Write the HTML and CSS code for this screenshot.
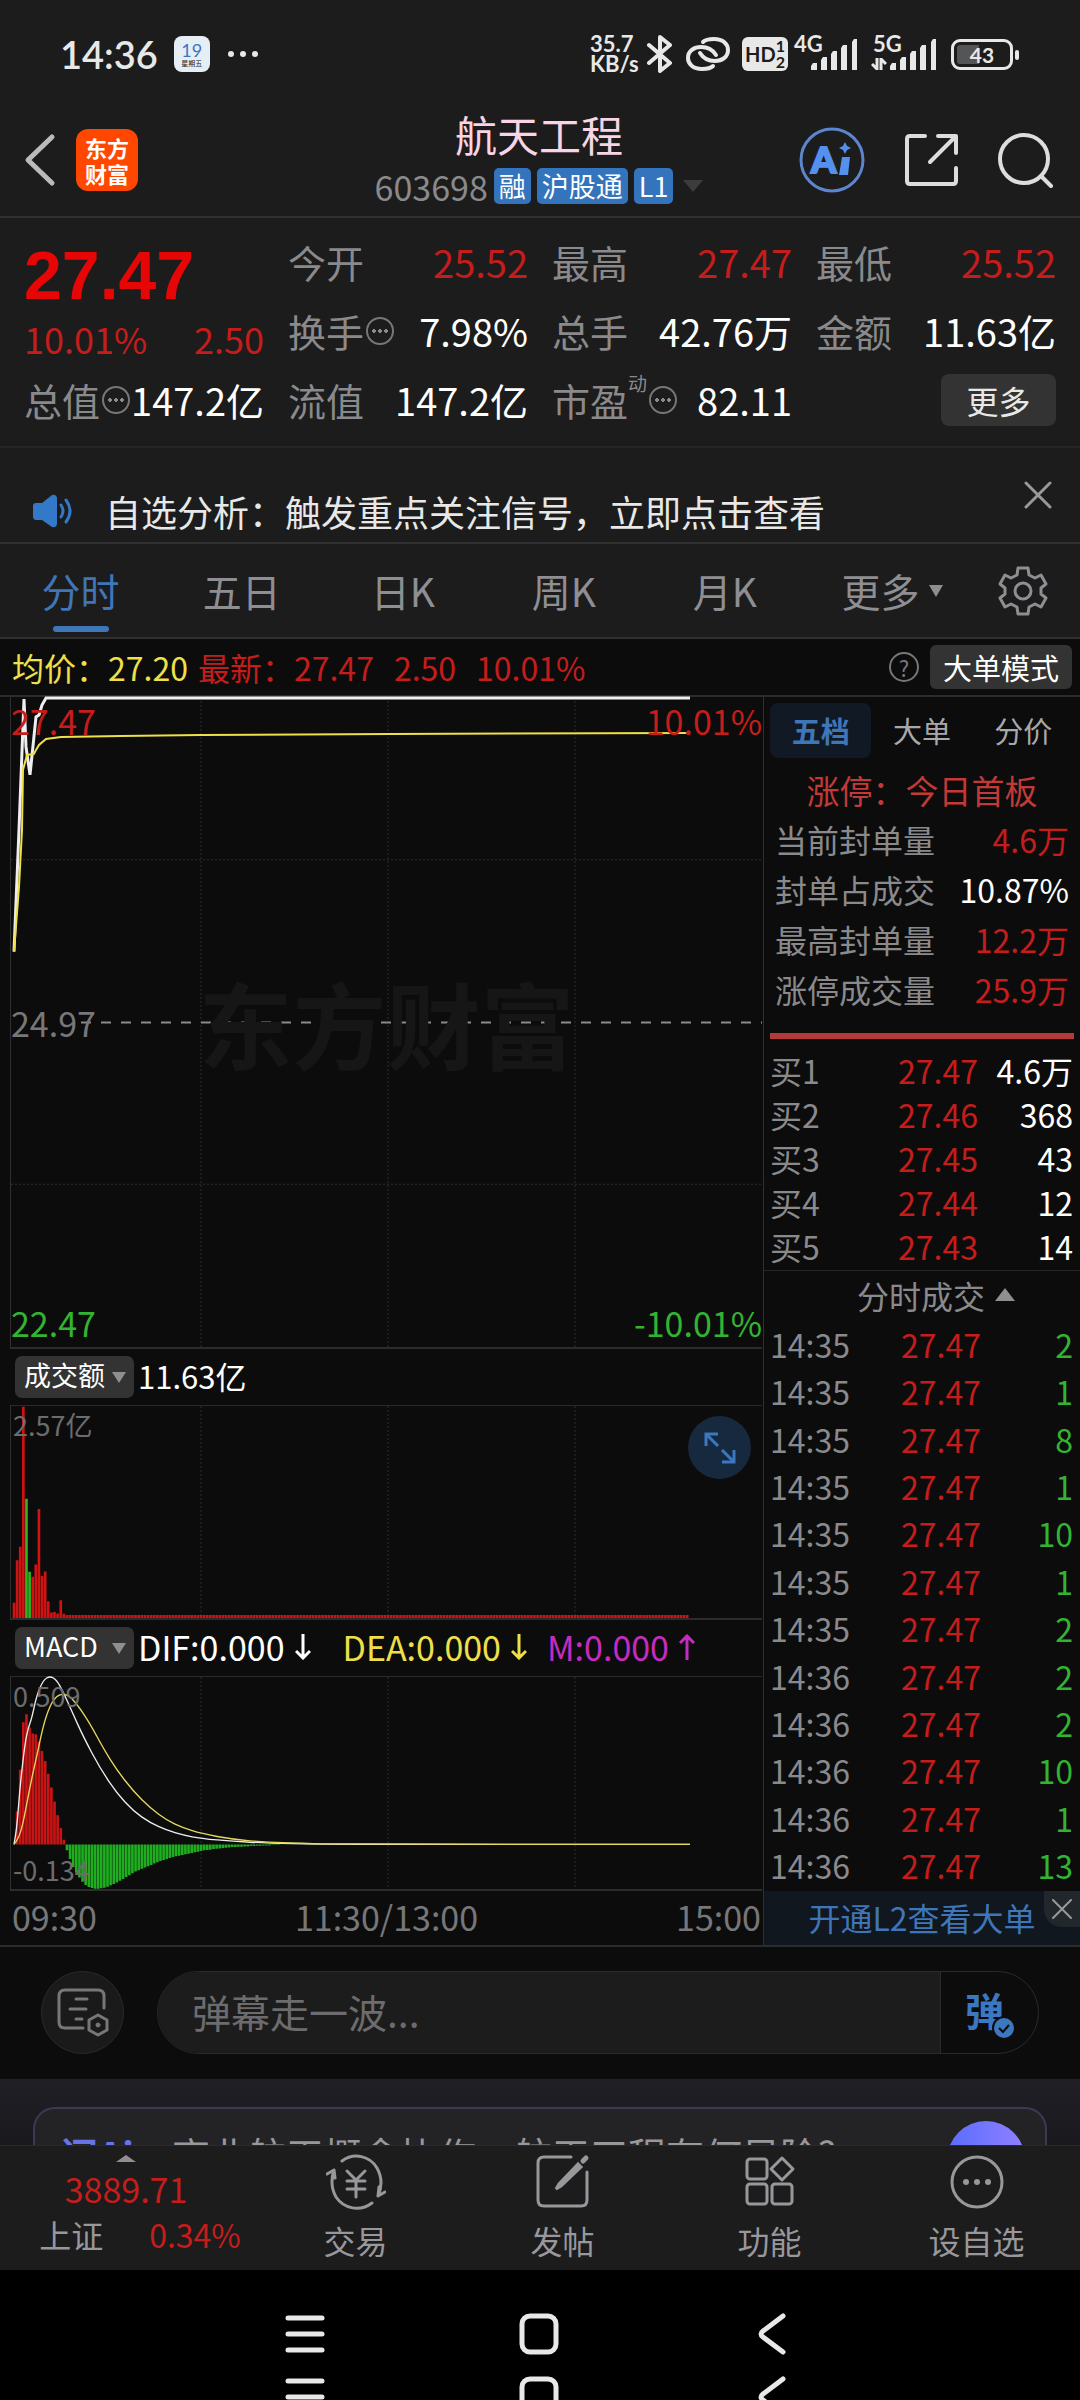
FILE: index.html
```html
<!DOCTYPE html>
<html lang="zh-CN">
<head>
    <meta charset="UTF-8">
    <meta name="viewport" content="width=device-width, initial-scale=1.0">
    <title>航天工程 603698</title>
    <link rel="stylesheet" href="styles.css">
</head>
<body>
<div class="app">
    <div class="status-bar">
        <span class="clock">14:36</span>
        <span class="calendar"><b>19</b><small>星期五</small></span>
        <span class="dots"><i></i><i></i><i></i></span>
        <div class="status-icons">
            <span class="net-speed">35.7<br>KB/s</span>
            <svg width="26" height="40" viewBox="0 0 26 40" fill="none" stroke="#e8e8e8" stroke-width="4" stroke-linejoin="round" stroke-linecap="round"><path d="M2 11L23 29L13 37V3L23 11L2 29"/></svg>
            <svg class="link-icon" width="44" height="36" viewBox="0 0 44 36" fill="none" stroke="#e8e8e8" stroke-width="4" stroke-linecap="round"><path d="M17 6C20 3 24 3 28 3C37 3 42 8 42 14C42 21 36 25 29 25C22 25 17 22 14 17"/><path d="M27 30C24 33 20 33 16 33C7 33 2 28 2 22C2 15 8 11 15 11C22 11 27 14 30 19"/></svg>
            <span class="hd">HD<sup>1</sup><sub>2</sub></span>
            <span class="signal"><em>4G</em><svg width="48" height="32" viewBox="0 0 48 32" fill="#e8e8e8"><path d="M1 32V28L3 25H7V32ZM11 32V22L13 19H17V32ZM21 32V16L23 13H27V32ZM31 32V10L33 7H37V32ZM42 32V4L44 1H47V32Z"/></svg></span>
            <span class="signal"><em>5G</em><svg class="arrows" width="16" height="12" viewBox="0 0 16 12" fill="none" stroke="#e8e8e8" stroke-width="3"><path d="M6 0V11L1 6M10 12V1L15 6"/></svg><svg width="48" height="32" viewBox="0 0 48 32" fill="#e8e8e8"><path d="M1 32V28L3 25H7V32ZM11 32V22L13 19H17V32ZM21 32V16L23 13H27V32ZM31 32V10L33 7H37V32ZM42 32V4L44 1H47V32Z"/></svg></span>
            <span class="battery">43</span>
        </div>
    </div>

    <header class="top-bar">
        <div class="top-left">
            <button class="icon-btn" aria-label="返回"><svg width="32" height="54" viewBox="0 0 32 54" fill="none" stroke="#bbb" stroke-width="5" stroke-linecap="round" stroke-linejoin="round"><path d="M28 4L4 27L28 50"/></svg></button>
            <span class="logo">东方<br>财富</span>
        </div>
        <div class="stock-name">
            <h1>航天工程</h1>
            <div class="stock-code">603698<span class="tag">融</span><span class="tag">沪股通</span><span class="tag">L1</span><i class="tri-down dark"></i></div>
        </div>
        <div class="top-right">
            <button class="icon-btn" aria-label="AI"><svg width="68" height="68" viewBox="0 0 68 68"><circle cx="34" cy="34" r="31" fill="none" stroke="#5b85cc" stroke-width="3"/><text x="13" y="47" font-size="36" class="ai-text">A</text><path d="M44 31H52L50 49H41Z" fill="#5590ee"/><path d="M47 16L49 20L53 22L49 24L47 28L45 24L41 22L45 20Z" fill="#5590ee"/></svg></button>
            <button class="icon-btn" aria-label="分享"><svg width="56" height="56" viewBox="0 0 56 56" fill="none" stroke="#ddd" stroke-width="4" stroke-linecap="round" stroke-linejoin="round"><path d="M21 4H6Q3 4 3 7V49Q3 52 6 52H49Q52 52 52 49V36M34 4H52V21M51 5L26 30"/></svg></button>
            <button class="icon-btn" aria-label="搜索"><svg width="56" height="56" viewBox="0 0 56 56" fill="none" stroke="#ddd" stroke-width="4" stroke-linecap="round"><circle cx="26" cy="27" r="24"/><path d="M43 44L53 54"/></svg></button>
        </div>
    </header>

    <main class="content">
        <section class="quote">
            <div class="quote-col">
                <div class="big-price">27.47</div>
                <div class="cell red change"><span>10.01%</span><span>2.50</span></div>
                <div class="cell"><span class="label">总值<i class="more-dot"></i></span><b>147.2亿</b></div>
            </div>
            <div class="quote-col">
                <div class="cell"><span class="label">今开</span><b class="red">25.52</b></div>
                <div class="cell"><span class="label">换手<i class="more-dot"></i></span><b>7.98%</b></div>
                <div class="cell"><span class="label">流值</span><b>147.2亿</b></div>
            </div>
            <div class="quote-col">
                <div class="cell"><span class="label">最高</span><b class="red">27.47</b></div>
                <div class="cell"><span class="label">总手</span><b>42.76万</b></div>
                <div class="cell"><span class="label">市盈<sup>动</sup><i class="more-dot"></i></span><b>82.11</b></div>
            </div>
            <div class="quote-col">
                <div class="cell"><span class="label">最低</span><b class="red">25.52</b></div>
                <div class="cell"><span class="label">金额</span><b>11.63亿</b></div>
                <div class="cell end"><button class="more-btn">更多</button></div>
            </div>
        </section>

        <section class="notice">
            <svg width="42" height="34" viewBox="0 0 42 34"><path d="M4 9H10L20 1Q24 0 25 4V30Q24 34 20 33L10 26H4Q1 26 1 22V12Q1 9 4 9Z" fill="#3478c8"/><path d="M29 11Q33 17 29 23M34 6Q42 17 34 28" fill="none" stroke="#3478c8" stroke-width="3" stroke-linecap="round"/></svg>
            <a href="#">自选分析：触发重点关注信号，立即点击查看</a>
            <button class="icon-btn" aria-label="关闭"><svg width="28" height="28" viewBox="0 0 28 28" stroke="#999" stroke-width="3" stroke-linecap="round"><path d="M2 2L26 26M26 2L2 26"/></svg></button>
        </section>

        <nav class="tabs">
            <a href="#" class="active">分时</a>
            <a href="#">五日</a>
            <a href="#">日K</a>
            <a href="#">周K</a>
            <a href="#">月K</a>
            <a href="#" class="tab-more">更多<i class="tri-down"></i></a>
            <button class="icon-btn" aria-label="设置"><svg width="50" height="50" viewBox="0 0 50 50" fill="none" stroke="#8e8e93" stroke-width="3" stroke-linejoin="round"><path d="M20 2H30L31 9L37 12L43 9L48 18L43 22V28L48 32L43 41L37 38L31 41L30 48H20L19 41L13 38L7 41L2 32L7 28V22L2 18L7 9L13 12L19 9Z"/><circle cx="25" cy="25" r="8"/></svg></button>
        </nav>

        <div class="info-bar">
            <span class="yellow">均价：27.20</span>
            <span class="red latest">最新：<span>27.47</span><span>2.50</span><span>10.01%</span></span>
            <span class="help">?</span>
            <button class="mode-btn">大单模式</button>
        </div>

        <div class="board">
            <div class="charts">
                <div class="plot plot-price">
                    <span class="watermark">东方财富</span>
                    <svg viewBox="0 0 751 651" preserveAspectRatio="none">
                        <path class="grid" d="M190 0V651M377 0V651M564 0V651M0 163H751M0 488H751"/>
                        <path d="M70 326H751" stroke="#8a8a8a" stroke-width="2" stroke-dasharray="10 10"/>
                        <polyline points="3,255 8,133 13,2 15,50 19,78 25,20 28,18 31,8 35,1 679,1" fill="none" stroke="#eee" stroke-width="3"/>
                        <polyline points="3,255 8,190 11,133 12,73 16,58 23,57 25,53 28,48 35,42 50,40 110,39 190,38 380,37 679,36" fill="none" stroke="#efe04a" stroke-width="2"/>
                    </svg>
                    <span class="lbl top left red">27.47</span>
                    <span class="lbl top right red">10.01%</span>
                    <span class="lbl middle left grey">24.97</span>
                    <span class="lbl bottom left green">22.47</span>
                    <span class="lbl bottom right green">-10.01%</span>
                </div>
                <div class="ind-bar">
                    <label class="picker"><select aria-label="指标一"><option>成交额</option></select></label>
                    <span class="amount">11.63亿</span>
                </div>
                <div class="plot plot-volume">
                    <svg id="volume" viewBox="33 376 2253 642" preserveAspectRatio="none">
                        <path class="grid" d="M603 376V1018M1164 376V1018M1725 376V1018"/>
                    </svg>
                    <span class="lbl small top left">2.57亿</span>
                    <button class="expand" aria-label="放大"><svg width="32" height="32" viewBox="0 0 32 32" fill="none" stroke="#3b78c0" stroke-width="3"><path d="M2 14V2H14M2 2L14 14M30 18V30H18M30 30L18 18"/></svg></button>
                </div>
                <div class="ind-bar">
                    <label class="picker"><select aria-label="指标二"><option>MACD</option></select></label>
                    <span class="dif">DIF:0.000<svg width="16" height="26" viewBox="0 0 16 26"><path d="M8 0V24M1 17L8 24L15 17"/></svg></span>
                    <span class="dea yellow">DEA:0.000<svg width="16" height="26" viewBox="0 0 16 26"><path d="M8 0V24M1 17L8 24L15 17"/></svg></span>
                    <span class="purple">M:0.000<svg width="16" height="26" viewBox="0 0 16 26"><path d="M8 26V2M1 9L8 2L15 9"/></svg></span>
                </div>
                <div class="plot plot-macd">
                    <svg id="macd" viewBox="33 109 2253 642" preserveAspectRatio="none">
                        <path class="grid" d="M603 109V751M1164 109V751M1725 109V751"/>
                    </svg>
                    <span class="lbl small top left">0.509</span>
                    <span class="lbl small bottom left">-0.134</span>
                </div>
                <div class="axis"><span>09:30</span><span>11:30/13:00</span><span>15:00</span></div>
            </div>

            <aside class="side">
                <div class="side-tabs"><button class="active">五档</button><button>大单</button><button>分价</button></div>
                <div class="limit-title">涨停：今日首板</div>
                <dl class="limit">
                    <div><dt>当前封单量</dt><dd class="red">4.6万</dd></div>
                    <div><dt>封单占成交</dt><dd>10.87%</dd></div>
                    <div><dt>最高封单量</dt><dd class="red">12.2万</dd></div>
                    <div><dt>涨停成交量</dt><dd class="red">25.9万</dd></div>
                </dl>
                <div class="ratio"></div>
                <table class="bids">
                    <tr><td>买1</td><td>27.47</td><td>4.6万</td></tr>
                    <tr><td>买2</td><td>27.46</td><td>368</td></tr>
                    <tr><td>买3</td><td>27.45</td><td>43</td></tr>
                    <tr><td>买4</td><td>27.44</td><td>12</td></tr>
                    <tr><td>买5</td><td>27.43</td><td>14</td></tr>
                </table>
                <button class="deals-title">分时成交<i class="tri-up"></i></button>
                <table class="deals">
                    <tr><td>14:35</td><td>27.47</td><td>2</td></tr>
                    <tr><td>14:35</td><td>27.47</td><td>1</td></tr>
                    <tr><td>14:35</td><td>27.47</td><td>8</td></tr>
                    <tr><td>14:35</td><td>27.47</td><td>1</td></tr>
                    <tr><td>14:35</td><td>27.47</td><td>10</td></tr>
                    <tr><td>14:35</td><td>27.47</td><td>1</td></tr>
                    <tr><td>14:35</td><td>27.47</td><td>2</td></tr>
                    <tr><td>14:36</td><td>27.47</td><td>2</td></tr>
                    <tr><td>14:36</td><td>27.47</td><td>2</td></tr>
                    <tr><td>14:36</td><td>27.47</td><td>10</td></tr>
                    <tr><td>14:36</td><td>27.47</td><td>1</td></tr>
                    <tr><td>14:36</td><td>27.47</td><td>13</td></tr>
                </table>
                <div class="l2">
                    <a href="#">开通L2查看大单</a>
                    <button aria-label="关闭"><svg width="20" height="20" viewBox="0 0 20 20" stroke="#999" stroke-width="2" stroke-linecap="round"><path d="M1 1L19 19M19 1L1 19"/></svg></button>
                </div>
            </aside>
        </div>

        <div class="danmu">
            <button class="danmu-set" aria-label="弹幕设置"><svg width="52" height="50" viewBox="0 0 52 50" fill="none" stroke="#777" stroke-width="3" stroke-linecap="round"><path d="M26 40H8Q2 40 2 34V8Q2 2 8 2H41Q47 2 47 8V20M19 11H30M13 21H29M19 31H25"/><path d="M41 27L50 32V42L41 47L32 42V32Z" stroke-linejoin="round"/><circle cx="41" cy="37" r="2" fill="#777" stroke-width="1"/></svg></button>
            <div class="danmu-box">
                <input type="text" aria-label="弹幕" placeholder="弹幕走一波...">
                <button aria-label="弹幕开关">弹<svg width="24" height="24" viewBox="0 0 24 24"><circle cx="12" cy="12" r="11" fill="#3b78c0" stroke="#0c0c0c" stroke-width="2"/><path d="M7 12L11 16L17 9" fill="none" stroke="#0c0c0c" stroke-width="2"/></svg></button>
            </div>
        </div>

        <section class="promo">
            <div class="promo-card">
                <b>问Ai</b>
                <span>商业航天概念协作，航天工程有何风险?</span>
                <i class="promo-go"><svg width="24" height="28" viewBox="0 0 24 28" fill="none" stroke="#fff" stroke-width="4" stroke-linecap="round"><path d="M12 26V3M4 11L12 3L20 11"/></svg></i>
            </div>
        </section>
    </main>

    <footer class="bottom-bar">
        <a href="#" class="index">
            <i class="tri-up"></i>
            <span class="index-value">3889.71</span>
            <span class="index-row">上证<em>0.34%</em></span>
        </a>
        <a href="#" class="item">
            <svg width="60" height="56" viewBox="0 0 60 56" fill="none" stroke="#98989c" stroke-width="3" stroke-linecap="round" stroke-linejoin="round"><path d="M16 7C28-2 44 2 51 14C56 23 56 33 52 42M52 42L59 38M52 42L53 33M46 49C34 58 18 55 10 43C5 34 5 25 8 16M8 16L1 20M8 16L9 24"/><path d="M21 17L30 26L39 17M30 26V43M21 27H39M21 35H39"/></svg>
            <span>交易</span>
        </a>
        <a href="#" class="item">
            <svg width="56" height="56" viewBox="0 0 56 56" fill="none" stroke="#98989c" stroke-width="3" stroke-linecap="round"><path d="M36 3H9Q3 3 3 9V46Q3 52 9 52H46Q52 52 52 46V18"/><path d="M43 10L24 30L21 35L26 32L46 13Z" fill="#98989c"/><path d="M48 7L51 4" stroke-width="5"/></svg>
            <span>发帖</span>
        </a>
        <a href="#" class="item">
            <svg width="52" height="56" viewBox="0 0 52 56" fill="none" stroke="#98989c" stroke-width="3" stroke-linejoin="round"><rect x="3" y="5" width="20" height="20" rx="3"/><rect x="3" y="30" width="20" height="20" rx="3"/><rect x="28" y="30" width="20" height="20" rx="3"/><path d="M38 4L49 15L38 26L27 15Z"/></svg>
            <span>功能</span>
        </a>
        <a href="#" class="item">
            <svg width="56" height="56" viewBox="0 0 56 56"><circle cx="28" cy="28" r="25" fill="none" stroke="#98989c" stroke-width="3"/><g fill="#98989c"><circle cx="17" cy="28" r="3"/><circle cx="28" cy="28" r="3"/><circle cx="39" cy="28" r="3"/></g></svg>
            <span>设自选</span>
        </a>
    </footer>

    <div class="sys-nav">
        <div class="sys-row">
            <svg width="44" height="44" viewBox="0 0 44 44"><path d="M5 6H39M5 22H39M5 38H39"/></svg>
            <svg width="44" height="44" viewBox="0 0 44 44"><rect x="5" y="4" width="34" height="36" rx="8"/></svg>
            <svg width="44" height="44" viewBox="0 0 44 44"><path d="M32 4L12 19Q8 22 12 25L32 40"/></svg>
        </div>
        <div class="sys-row">
            <svg width="44" height="44" viewBox="0 0 44 44"><path d="M5 6H39M5 22H39M5 38H39"/></svg>
            <svg width="44" height="44" viewBox="0 0 44 44"><rect x="5" y="4" width="34" height="36" rx="8"/></svg>
            <svg width="44" height="44" viewBox="0 0 44 44"><path d="M32 4L12 19Q8 22 12 25L32 40"/></svg>
        </div>
    </div>
</div>
<script src="charts.js"></script>
</body>
</html>
```

FILE: styles.css
```css
* {
    box-sizing: border-box;
}

body {
    margin: 0;
    background-color: #000;
    color: #fff;
    font-family: "Noto Sans CJK SC", "Noto Sans", sans-serif;
}

a {
    color: inherit;
    text-decoration: none;
}

i, em {
    font-style: normal;
}

button, input, select {
    font-family: inherit;
    color: inherit;
    border: none;
    background: none;
    padding: 0;
    margin: 0;
}

svg {
    display: block;
    flex: none;
}

.red { color: #c41d1b; }
.green { color: #32b432; }
.yellow { color: #efe04a; }
.purple { color: #c42cc0; }
.grey { color: #77777a; }

.app {
    display: flex;
    flex-direction: column;
    height: 100vh;
    overflow: hidden;
    background-color: #1c1c1c;
}

.icon-btn {
    display: flex;
    align-items: center;
}

.tri-down {
    border: 7px solid transparent;
    border-top: 12px solid #8e8e93;
    border-bottom: none;
}

.tri-down.dark {
    border-width: 12px 10px 0;
    border-top-color: #3c3c3c;
    margin-left: 4px;
}

.tri-up {
    border: 10px solid transparent;
    border-bottom: 13px solid #8e8e93;
    border-top: none;
}

/* status bar */
.status-bar {
    display: flex;
    align-items: center;
    flex: none;
    height: 108px;
    padding: 0 67px 0 60px;
    color: #e8e8e8;
}

.clock {
    font-family: Lato, "Noto Sans", sans-serif;
    font-size: 38px;
    font-weight: 600;
}

.calendar {
    display: flex;
    flex-direction: column;
    align-items: center;
    width: 36px;
    height: 36px;
    margin-left: 16px;
    border-radius: 8px;
    background-color: #e6eef5;
    color: #3b76c4;
    line-height: 1;
}

.calendar b {
    margin-top: 5px;
    font: 18px/18px Lato, sans-serif;
}

.calendar small {
    font-size: 7px;
    line-height: 9px;
    color: #222;
}

.dots {
    display: flex;
    gap: 6px;
    margin-left: 18px;
}

.dots i {
    width: 6px;
    height: 6px;
    border-radius: 50%;
    background-color: #e8e8e8;
}

.status-icons {
    display: flex;
    align-items: center;
    margin-left: auto;
}

.net-speed {
    width: 57px;
    font: bold 22px/20px Lato, sans-serif;
}

.link-icon {
    margin: 0 12px 0 13px;
}

.hd {
    position: relative;
    width: 46px;
    height: 34px;
    padding-left: 3px;
    border-radius: 6px;
    background-color: #e8e8e8;
    color: #1c1c1c;
    font: bold 20px/34px Lato, sans-serif;
}

.hd sup, .hd sub {
    position: absolute;
    right: 3px;
    top: 1px;
    font-size: 16px;
    line-height: 16px;
}

.hd sub {
    top: 17px;
}

.signal {
    position: relative;
    margin-left: 22px;
}

.signal + .signal {
    margin-left: 31px;
}

.signal em {
    position: absolute;
    top: -4px;
    left: -16px;
    font: bold 22px/20px Lato, sans-serif;
}

.signal .arrows {
    position: absolute;
    left: -18px;
    bottom: 0;
}

.battery {
    position: relative;
    width: 62px;
    height: 31px;
    margin-left: 14px;
    border: 3px solid #e8e8e8;
    border-radius: 9px;
    background: linear-gradient(to right, #555 45%, transparent 45%) content-box;
    padding: 3px;
    font: bold 21px/20px Lato, sans-serif;
    text-align: center;
}

.battery::after {
    content: "";
    position: absolute;
    top: 8px;
    right: -9px;
    width: 4px;
    height: 10px;
    border-radius: 2px;
    background-color: #e8e8e8;
}

/* top bar */
.top-bar {
    display: grid;
    grid-template-columns: 1fr auto 1fr;
    align-items: center;
    flex: none;
    height: 110px;
    padding: 0 26px 15px 24px;
    border-bottom: 2px solid #303030;
}

.top-left, .top-right {
    display: flex;
    align-items: center;
}

.top-left {
    gap: 20px;
}

.top-right {
    justify-content: flex-end;
    gap: 38px;
}

.logo {
    width: 62px;
    height: 62px;
    padding-top: 5px;
    border-radius: 12px;
    background-color: #ff4700;
    font-size: 22px;
    line-height: 26px;
    font-weight: 700;
    text-align: center;
}

.stock-name h1 {
    margin: 0;
    font-size: 42px;
    line-height: 52px;
    font-weight: 400;
    color: #f8d4e4;
    text-align: center;
}

.stock-code {
    display: flex;
    align-items: center;
    justify-content: center;
    gap: 6px;
    height: 52px;
    font-size: 34px;
    color: #8a8a8d;
}

.tag {
    padding: 0 5px;
    border-radius: 5px;
    background-color: #3474bc;
    color: #fff;
    font-size: 27px;
    line-height: 36px;
}

.ai-text {
    font-family: Lato, sans-serif;
    font-weight: 900;
    fill: #5590ee;
    stroke: #5590ee;
    stroke-width: 2px;
}

/* quote numbers */
.content {
    flex: 1;
    min-height: 0;
    overflow: hidden;
}

.quote {
    display: grid;
    grid-template-columns: repeat(4, 1fr);
    gap: 24px;
    height: 230px;
    padding: 9px 24px 0;
    border-bottom: 2px solid #262626;
}

.quote-col {
    display: flex;
    flex-direction: column;
}

.big-price {
    height: 83px;
    font-family: "Liberation Sans", sans-serif;
    font-size: 68px;
    line-height: 96px;
    font-weight: 700;
    color: #e60606;
}

.cell {
    display: flex;
    align-items: center;
    justify-content: space-between;
    height: 69px;
    font-size: 38px;
    white-space: nowrap;
}

.cell.change {
    height: 55px;
    font-size: 36px;
}

.cell b {
    font-weight: 400;
}

.cell.end {
    justify-content: flex-end;
}

.label {
    display: flex;
    align-items: center;
    color: #8a8a8d;
}

.label sup {
    align-self: flex-start;
    font-size: 19px;
    line-height: 22px;
}

.more-dot {
    width: 28px;
    height: 28px;
    margin-left: 2px;
    border: 2px solid #77777a;
    border-radius: 50%;
    background:
        radial-gradient(circle at 6px 12px, #8a8a8d 2px, transparent 2px),
        radial-gradient(circle at 12px 12px, #8a8a8d 2px, transparent 2px),
        radial-gradient(circle at 18px 12px, #8a8a8d 2px, transparent 2px);
}

.more-btn {
    width: 115px;
    height: 52px;
    border-radius: 8px;
    background-color: #333;
    color: #e8e8e8;
    font-size: 32px;
    line-height: 48px;
}

/* notice */
.notice {
    display: flex;
    align-items: center;
    gap: 31px;
    height: 96px;
    padding: 32px 28px 0 32px;
    border-bottom: 2px solid #303030;
    font-size: 36px;
    color: #e8e8e8;
}

.notice .icon-btn {
    margin: 0 0 32px auto;
}

/* period tabs */
.tabs {
    display: grid;
    grid-template-columns: repeat(6, 162fr) 114fr;
    align-items: center;
    justify-items: center;
    height: 95px;
    border-bottom: 2px solid #303030;
    font-size: 39px;
    color: #8e8e93;
}

.tabs a {
    line-height: 91px;
}

.tabs .active {
    position: relative;
    color: #3f76b8;
}

.tabs .active::after {
    content: "";
    position: absolute;
    left: 11px;
    right: 11px;
    bottom: 4px;
    height: 6px;
    border-radius: 3px;
    background-color: #3f76b8;
}

.tab-more {
    display: flex;
    align-items: center;
    gap: 9px;
    padding-left: 12px;
}

.info-bar {
    display: flex;
    align-items: center;
    height: 58px;
    padding: 0 8px 0 12px;
    border-bottom: 2px solid #2c2c2c;
    background-color: #0c0c0c;
    font-size: 32px;
}

.latest {
    display: flex;
    gap: 20px;
    margin-left: 10px;
}

.latest span:first-child {
    margin-left: -20px;
}

.help {
    width: 30px;
    height: 30px;
    margin: 0 11px 0 auto;
    border: 2px solid #77777a;
    border-radius: 50%;
    color: #77777a;
    font-size: 22px;
    line-height: 26px;
    text-align: center;
}

.mode-btn {
    width: 142px;
    height: 44px;
    border-radius: 6px;
    background-color: #333;
    font-size: 29px;
    line-height: 42px;
}

/* charts and order book */
.board {
    display: grid;
    grid-template-columns: minmax(0, 1fr) 317px;
    border-bottom: 2px solid #2c2c2c;
    background-color: #0c0c0c;
}

.plot {
    position: relative;
    margin: 0 1px 0 10px;
    border-left: 1px solid #303030;
    border-bottom: 2px solid #2c2c2c;
}

.plot > svg {
    width: 100%;
    height: 100%;
    overflow: visible;
}

.plot-price {
    height: 652px;
}

.plot-volume, .plot-macd {
    height: 215px;
    border-top: 1px solid #2a2a2a;
}

.grid {
    fill: none;
    stroke: #2e2e2e;
    stroke-width: 1px;
    stroke-dasharray: 2 2;
    vector-effect: non-scaling-stroke;
}

.watermark {
    position: absolute;
    inset: 0;
    display: flex;
    align-items: center;
    justify-content: center;
    font-size: 94px;
    line-height: 94px;
    font-weight: 700;
    color: #161616;
}

.lbl {
    position: absolute;
    font-size: 34px;
    line-height: 48px;
}

.lbl.left { left: 0; }
.lbl.right { right: 0; }
.lbl.top { top: 0; }
.lbl.bottom { bottom: 0; }
.lbl.middle { top: 302px; }

.lbl.small {
    left: 2px;
    font-size: 27px;
    line-height: 38px;
    color: #6c6c6e;
}

.ind-bar {
    display: flex;
    align-items: center;
    height: 56px;
    padding-left: 15px;
    font-size: 34px;
    line-height: 52px;
    white-space: nowrap;
}

.ind-bar span {
    display: flex;
    align-items: center;
    gap: 10px;
    height: 54px;
    margin-bottom: 2px;
}

.ind-bar .amount {
    font-size: 31px;
}

.ind-bar span svg {
    fill: none;
    stroke: currentColor;
    stroke-width: 3px;
}

.ind-bar .dif {
    margin-right: 32px;
}

.ind-bar .dea {
    margin-right: 20px;
}

.picker {
    position: relative;
    width: 119px;
    height: 42px;
    margin-right: 4px;
    border-radius: 7px;
    background-color: #333;
}

.picker::after {
    content: "";
    position: absolute;
    top: 16px;
    right: 8px;
    border: 7px solid transparent;
    border-top: 11px solid #8e8e93;
    border-bottom: none;
}

.picker select {
    appearance: none;
    display: block;
    width: 100%;
    height: 42px;
    padding: 0 0 4px 9px;
    font-size: 27px;
    line-height: 38px;
}

.expand {
    position: absolute;
    top: 10px;
    right: 11px;
    display: flex;
    align-items: center;
    justify-content: center;
    width: 63px;
    height: 63px;
    border-radius: 50%;
    background-color: #17293f;
}

.axis {
    display: flex;
    justify-content: space-between;
    height: 54px;
    padding: 0 2px 0 12px;
    font-size: 34px;
    line-height: 52px;
    color: #77777a;
}

.side {
    display: flex;
    flex-direction: column;
    border-left: 1px solid #303030;
    font-size: 32px;
}

.side-tabs {
    display: grid;
    grid-template-columns: repeat(3, 1fr);
    padding: 6px 6px 0;
}

.side-tabs button {
    height: 55px;
    border-radius: 8px;
    font-size: 29px;
    line-height: 53px;
    color: #a8a8aa;
}

.side-tabs .active {
    background-color: #111a24;
    color: #3f76b8;
    font-weight: 700;
}

.limit-title {
    height: 56px;
    padding-top: 6px;
    font-size: 33px;
    line-height: 52px;
    text-align: center;
    color: #c23a38;
}

.limit {
    margin: 0;
    padding: 0 11px;
}

.limit div {
    display: flex;
    justify-content: space-between;
    line-height: 50px;
}

.limit dt {
    color: #8a8a8d;
}

.limit dd {
    margin: 0;
}

.ratio {
    height: 6px;
    margin: 19px 6px 11px;
    background-color: #b33a39;
}

.bids, .deals {
    border-collapse: collapse;
    table-layout: fixed;
    width: 100%;
}

.bids td, .deals td {
    padding: 0 7px 4px 6px;
    line-height: 40px;
    color: #8a8a8d;
}

.bids td + td, .deals td + td {
    padding-left: 0;
    text-align: right;
    color: #c41d1b;
}

.bids td:first-child, .deals td:first-child {
    width: 110px;
}

.bids td:nth-child(2) {
    width: 111px;
}

.deals td:nth-child(2) {
    width: 114px;
}

.bids td:last-child {
    color: #fff;
}

.deals td:last-child {
    color: #32b432;
}

.deals-title {
    display: flex;
    align-items: center;
    justify-content: center;
    gap: 10px;
    height: 52px;
    padding: 0 0 4px 28px;
    border-top: 1px solid #262626;
    font-size: 32px;
    line-height: 44px;
    color: #8a8a8d;
}

.deals {
    flex: 1;
}

.l2 {
    position: relative;
    height: 54px;
    background-color: #10171f;
    color: #3f76b8;
    font-size: 32px;
    line-height: 52px;
    text-align: center;
}

.l2 button {
    position: absolute;
    top: 0;
    right: 0;
    display: flex;
    align-items: center;
    justify-content: center;
    width: 36px;
    height: 36px;
    border-bottom-left-radius: 18px;
    background-color: #22272c;
}

/* danmu input */
.danmu {
    display: flex;
    gap: 33px;
    padding: 24px 41px 25px;
    background-color: #0c0c0c;
}

.danmu-set {
    display: flex;
    align-items: center;
    justify-content: center;
    width: 83px;
    height: 83px;
    border: 1px solid #2a2a2a;
    border-radius: 50%;
    background-color: #1a1a1a;
}

.danmu-box {
    display: flex;
    flex: 1;
    height: 83px;
    border: 1px solid #2a2a2a;
    border-radius: 42px;
    overflow: hidden;
}

.danmu-box input {
    flex: 1;
    min-width: 0;
    padding: 0 0 4px 34px;
    background-color: #1c1c1c;
    font-size: 39px;
}

.danmu-box input::placeholder {
    color: #6c6c6e;
}

.danmu-box button {
    position: relative;
    width: 98px;
    padding: 0 10px 8px 0;
    border-left: 1px solid #2a2a2a;
    font-size: 39px;
    font-weight: 700;
    color: #3b78c0;
}

.danmu-box button svg {
    position: absolute;
    right: 22px;
    bottom: 13px;
}

.promo {
    padding: 28px 33px 0;
    background: linear-gradient(#212026, #19181d 66px);
}

.promo-card {
    display: flex;
    align-items: flex-start;
    padding: 12px 20px 12px 25px;
    border: 2px solid #3b3955;
    border-radius: 22px;
    background-color: #232326;
    font-size: 38px;
    line-height: 66px;
    color: #98989c;
}

.promo-card b {
    width: 112px;
    color: #6674e8;
}

.promo-go {
    display: flex;
    align-items: center;
    justify-content: center;
    width: 78px;
    height: 78px;
    margin-left: auto;
    border-radius: 50%;
    background: linear-gradient(to right, #5a6cff, #9080ff);
}

/* bottom bar */
.bottom-bar {
    display: grid;
    grid-template-columns: 252fr 207fr 207fr 207fr 207fr;
    flex: none;
    height: 125px;
    border-top: 1px solid #2a2a2a;
    background-color: #1c1c1c;
    font-size: 32px;
    color: #98989c;
}

.index {
    display: flex;
    flex-direction: column;
    align-items: center;
    padding-top: 9px;
}

.index .tri-up {
    border-bottom-width: 7px;
}

.index-value {
    margin-top: 4px;
    font-size: 34px;
    line-height: 46px;
    color: #c41d1b;
}

.index-row {
    display: flex;
    gap: 46px;
    padding-left: 28px;
    line-height: 44px;
}

.index-row em {
    color: #c41d1b;
}

.item {
    display: flex;
    flex-direction: column;
    align-items: center;
    padding-top: 8px;
    line-height: 44px;
}

.item span {
    margin-top: 8px;
}

/* system navigation */
.sys-nav {
    flex: none;
    height: 130px;
    padding: 42px 3px 0 0;
    overflow: hidden;
    background-color: #000;
}

.sys-row {
    display: flex;
    justify-content: center;
    gap: 190px;
    height: 63px;
}

.sys-row svg {
    fill: none;
    stroke: #e8e8e8;
    stroke-width: 5px;
    stroke-linecap: round;
}
```

FILE: charts.js
```js
const SVG_NS = 'http://www.w3.org/2000/svg';
const STEP = 9.35; // one minute
const X0 = 38;

function addPath(svg, d, attrs) {
    const path = document.createElementNS(SVG_NS, 'path');
    path.setAttribute('d', d);
    for (const key in attrs) {
        path.setAttribute(key, attrs[key]);
    }
    svg.appendChild(path);
}

function bars(svg, values, base, color, test) {
    let d = '';
    values.forEach((v, i) => {
        if (!test(v, i) || v === 0) return;
        d += 'M' + (X0 + i * STEP) + ' ' + base + 'v' + (-v) + 'h8v' + v + 'z';
    });
    addPath(svg, d, { fill: color });
}

function curve(svg, points, color) {
    let d = 'M' + points[0];
    for (let i = 1; i < points.length - 1; i++) {
        const mx = (points[i][0] + points[i + 1][0]) / 2;
        const my = (points[i][1] + points[i + 1][1]) / 2;
        d += 'Q' + points[i] + ' ' + mx + ',' + my;
    }
    d += 'L' + points[points.length - 1];
    addPath(svg, d, { fill: 'none', stroke: color, 'stroke-width': 4 });
}

// Turnover
const volume = document.getElementById('volume');
const turnover = [46, 175, 216, 640, 361, 140, 125, 162, 330, 127, 141, 51, 17, 18, 14, 54, 13];
while (turnover.length < 217) turnover.push(9);
const falling = [4, 5];
bars(volume, turnover, 1018, '#d01212', (v, i) => !falling.includes(i));
bars(volume, turnover, 1018, '#32b420', (v, i) => falling.includes(i));

// MACD
const macd = document.getElementById('macd');
const hist = [0, 100, 226, 370, 394, 354, 336, 334, 311, 283, 253, 214, 172, 130, 88, 50, 14,
    -18, -44, -68, -86, -100, -113, -123, -129, -132, -134, -134, -133, -131, -128, -124, -120,
    -115, -110, -105, -99, -93, -87, -82, -78, -74, -70, -66, -62, -58, -54, -50, -47, -44, -41,
    -38, -36, -34, -32, -30, -28, -26, -24, -22, -20, -18, -17, -16, -14, -13, -12, -11, -10, -9,
    -8, -8, -7, -7, -6, -6, -5, -5, -4, -4, -3, -3, -3, -2, -2, -2];
bars(macd, hist, 616, '#c81414', v => v > 0);
bars(macd, hist, 616, '#1fae1f', v => v < 0);

curve(macd, [[42, 616], [50, 575], [60, 440], [75, 310], [85, 262], [95, 235], [110, 165],
    [130, 118], [150, 106], [170, 118], [190, 155], [215, 212], [250, 290], [300, 385], [350, 460],
    [400, 515], [450, 550], [500, 573], [550, 588], [603, 598], [700, 607], [800, 612],
    [950, 615], [1200, 616], [2070, 616]], '#eee');
curve(macd, [[42, 616], [55, 600], [70, 550], [90, 440], [110, 350], [130, 255], [150, 195],
    [170, 166], [190, 160], [210, 168], [235, 197], [270, 250], [310, 325], [350, 390], [400, 455],
    [450, 505], [500, 543], [550, 566], [603, 583], [700, 601], [800, 609], [900, 613],
    [1050, 616], [2070, 616]], '#e5d860');
```
